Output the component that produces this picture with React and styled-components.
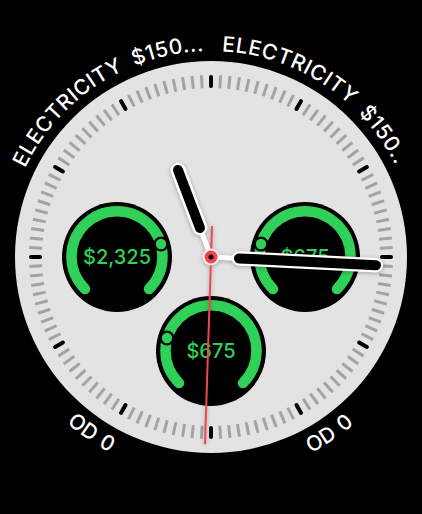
import React from 'react';
import styled, { createGlobalStyle } from 'styled-components';

const GlobalStyle = createGlobalStyle`
  html, body {
    margin: 0;
    background: #000;
  }
`;

const Page = styled.div`
  position: relative;
  width: 422px;
  height: 514px;
  display: flex;
  align-items: center;
  justify-content: center;
  overflow: hidden;
  background: #000;
`;

const BezelLayer = styled.svg`
  position: absolute;
  inset: 0;
`;

const BezelText = styled.text`
  font-family: Inter, "Liberation Sans", sans-serif;
  font-size: 21px;
  font-weight: 500;
  letter-spacing: ${(p) => (p.$wide ? 0.6 : 0)}px;
  word-spacing: ${(p) => (p.$wide ? 5 : 2)}px;
  fill: #fff;
`;

const Dial = styled.div`
  position: relative;
  width: 392px;
  height: 392px;
  box-sizing: border-box;
  padding-top: 141px;
  border-radius: 50%;
  background: #e3e3e3;
  display: flex;
  flex-direction: column;
  align-items: center;
`;

const DialLayer = styled.svg`
  position: absolute;
  inset: 0;
  overflow: visible;
`;

const HandsLayer = styled(DialLayer)`
  filter: drop-shadow(0 1px 2px rgba(0, 0, 0, 0.3));
`;

const GaugeRow = styled.div`
  display: flex;
  gap: 78px;
  margin-bottom: -16px;
`;

const GaugeFace = styled.div`
  position: relative;
  width: 110px;
  height: 110px;
  border-radius: 50%;
  background: #000;
  display: flex;
  align-items: center;
  justify-content: center;
`;

const GaugeArc = styled.svg`
  position: absolute;
  inset: 0;
`;

const GaugeValue = styled.span`
  position: relative;
  font-family: Inter, "Liberation Sans", sans-serif;
  font-size: 20px;
  font-weight: 500;
  color: #30d158;
`;

const Gauge = ({ value, dotX }) => (
  <GaugeFace>
    <GaugeArc viewBox="-55 -55 110 110" width="110" height="110">
      <path
        d="M -32 32 A 45.5 45.5 0 1 1 32 32"
        fill="none"
        stroke="#30d158"
        strokeWidth="10.5"
        strokeLinecap="round"
      />
      <circle cx={dotX} cy="-13" r="7.5" fill="#000" />
      <circle cx={dotX} cy="-13" r="5.2" fill="#30d158" />
    </GaugeArc>
    <GaugeValue>{value}</GaugeValue>
  </GaugeFace>
);

const ticks = Array.from({ length: 120 }, (_, i) => i * 3);

const DialTicks = () => (
  <DialLayer viewBox="-196 -196 392 392" width="392" height="392">
    {ticks.map((deg) => {
      const major = deg % 30 === 0;
      return (
        <line
          key={deg}
          x1="0"
          y1={major ? -171 : -169}
          x2="0"
          y2={major ? -180 : -182}
          stroke={major ? '#000' : '#a3a3a3'}
          strokeWidth={major ? 4 : 3}
          strokeLinecap={major ? 'round' : 'butt'}
          transform={`rotate(${deg})`}
        />
      );
    })}
  </DialLayer>
);

const Hands = () => (
  <HandsLayer viewBox="-196 -196 392 392" width="392" height="392">
    <g strokeLinecap="round">
      <line x1="0" y1="0" x2="-11" y2="-29" stroke="#fff" strokeWidth="5" />
      <line x1="-11" y1="-29" x2="-33" y2="-87" stroke="#fff" strokeWidth="15" />
      <line x1="-11" y1="-29" x2="-33" y2="-87" stroke="#000" strokeWidth="10" />
      <line x1="0" y1="0" x2="28" y2="1.4" stroke="#fff" strokeWidth="5" />
      <line x1="28" y1="1.4" x2="165" y2="8.2" stroke="#fff" strokeWidth="14.5" />
      <line x1="28" y1="1.4" x2="165" y2="8.2" stroke="#000" strokeWidth="10" />
    </g>
    <line x1="1" y1="-31" x2="-6" y2="187" stroke="#f5444f" strokeWidth="2" />
    <circle cx="0" cy="0" r="8.5" fill="#f1f1f1" />
    <circle cx="0" cy="0" r="6.5" fill="#f5444f" />
    <circle cx="0" cy="0" r="2.5" fill="#000" />
  </HandsLayer>
);

// point on a circle round the dial centre, degrees clockwise from 12 o'clock
const polar = (r, deg) => {
  const a = (deg * Math.PI) / 180;
  return `${(211 + r * Math.sin(a)).toFixed(2)} ${(257 - r * Math.cos(a)).toFixed(2)}`;
};

const Bezel = () => (
  <BezelLayer viewBox="0 0 422 514" width="422" height="514">
    <defs>
      <path id="top-left" d={`M ${polar(206, -64.5)} A 206 206 0 0 1 ${polar(206, 0)}`} />
      <path id="top-right" d={`M ${polar(206, 3)} A 206 206 0 0 1 ${polar(206, 70)}`} />
      <path id="bottom-left" d={`M ${polar(220, -139)} A 220 220 0 0 0 ${polar(220, -165)}`} />
      <path id="bottom-right" d={`M ${polar(220, 153)} A 220 220 0 0 0 ${polar(220, 128)}`} />
    </defs>
    <BezelText $wide>
      <textPath href="#top-left">ELECTRICITY $150...</textPath>
    </BezelText>
    <BezelText $wide>
      <textPath href="#top-right">ELECTRICITY $150..</textPath>
    </BezelText>
    <BezelText>
      <textPath href="#bottom-left">OD 0</textPath>
    </BezelText>
    <BezelText>
      <textPath href="#bottom-right">OD 0</textPath>
    </BezelText>
  </BezelLayer>
);

const App = () => (
  <Page>
    <GlobalStyle />
    <Bezel />
    <Dial>
      <DialTicks />
      <GaugeRow>
        <Gauge value="$2,325" dotX={44} />
        <Gauge value="$675" dotX={-44} />
      </GaugeRow>
      <Gauge value="$675" dotX={-44} />
      <Hands />
    </Dial>
  </Page>
);

export default App;
